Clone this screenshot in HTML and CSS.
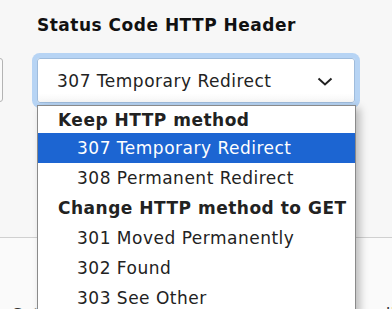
FILE: index.html
```html
<!DOCTYPE html>
<html lang="en">
<head>
    <meta charset="UTF-8">
    <meta name="viewport" content="width=device-width, initial-scale=1.0">
    <title>Redirect settings</title>
    <link rel="stylesheet" href="styles.css">
</head>
<body>
    <div class="page">
        <div class="top">
            <div class="side-box"></div>
            <div class="field">
                <h2 class="label">Status Code HTTP Header</h2>
                <div class="select">
                    <span>307 Temporary Redirect</span>
                    <svg class="chevron" width="16" height="9" viewBox="0 0 16 9">
                        <path d="M1.5 1.5 L8 7.5 L14.5 1.5" fill="none" stroke="#222" stroke-width="2"/>
                    </svg>
                </div>
            </div>
        </div>
        <div class="bottom">
            <span>Set</span>
            <span>will</span>
        </div>

        <ul class="dropdown">
            <li class="group first">Keep HTTP method</li>
            <li class="option selected">307 Temporary Redirect</li>
            <li class="option">308 Permanent Redirect</li>
            <li class="group">Change HTTP method to GET</li>
            <li class="option">301 Moved Permanently</li>
            <li class="option">302 Found</li>
            <li class="option">303 See Other</li>
        </ul>
    </div>
</body>
</html>
```

FILE: styles.css
```css
body {
    margin: 0;
    font-family: "DejaVu Sans", Verdana, sans-serif;
    background-color: #f7f7f7;
    color: #222;
    overflow: hidden;
}
.page {
    position: relative;
    height: 309px;
}
.top {
    display: flex;
    height: 237px;
    border-bottom: 1px solid #d0d0d0;
}
.side-box {
    width: 20px;
    height: 42px;
    margin-left: -19px;
    margin-top: 58px;
    border: 1px solid #b4b4b4;
    border-radius: 3px;
    background: #fafafa;
}
.field {
    margin-left: 34px;
}
.label {
    margin: 15px 0 0 0;
    font-size: 17px;
    line-height: 21px;
    letter-spacing: 0.5px;
    font-weight: bold;
    color: #111;
}
.select {
    display: flex;
    align-items: center;
    justify-content: space-between;
    width: 318px;
    height: 45px;
    margin-top: 22px;
    padding: 0 21px 0 19px;
    box-sizing: border-box;
    border: 1px solid #9fbcdc;
    border-radius: 3px;
    background: linear-gradient(#ffffff 80%, #f6f6f6);
    box-shadow: 0 0 0 5px #b7d4f4;
    font-size: 17px;
    letter-spacing: 0.5px;
}
.chevron {
    margin-top: 1px;
}
.bottom {
    display: flex;
    justify-content: space-between;
    height: 71px;
    padding: 67px 0 0 12px;
    box-sizing: border-box;
    background-color: #fafafa;
    font-size: 17px;
    line-height: 20px;
    color: #333;
}
.bottom span:last-child {
    margin-right: -8px;
}
.dropdown {
    position: absolute;
    top: 105px;
    left: 37px;
    width: 317px;
    margin: 0;
    padding: 0;
    list-style: none;
    background: #fff;
    border: 1px solid #8a8a8a;
    box-shadow: 4px 3px 8px rgba(0, 0, 0, 0.25);
    font-size: 17px;
    letter-spacing: 0.5px;
}
.dropdown li {
    height: 30px;
    line-height: 30px;
    white-space: nowrap;
}
.group {
    padding-left: 20px;
    font-weight: bold;
    color: #222;
}
.group.first {
    height: 27px;
    line-height: 28px;
}
.option {
    padding-left: 39px;
    color: #222;
}
.option.selected {
    background-color: #1c65d2;
    color: #fff;
}
```
